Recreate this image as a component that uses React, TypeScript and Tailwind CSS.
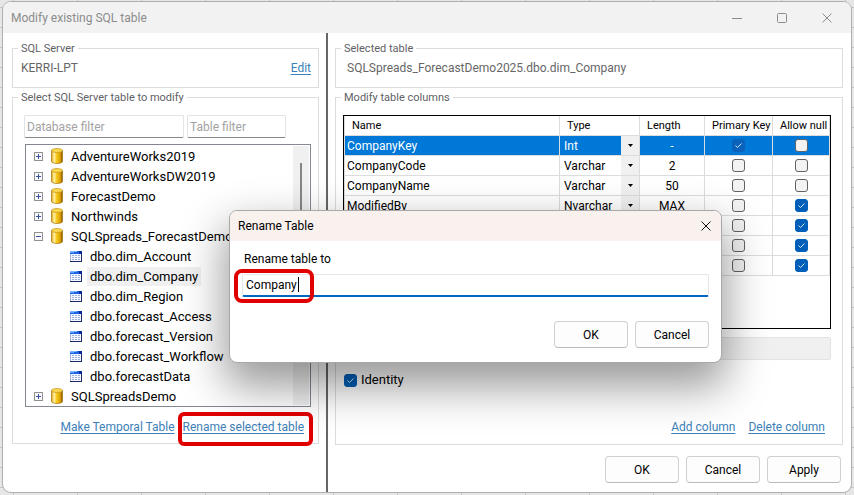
import React from "react";

const legend = "absolute -top-[7px] left-[5px] bg-white px-[3px] text-[11px] leading-[14px] text-[#5f5f66]";
const link = "block text-[#3d7fb8] underline underline-offset-2 text-[12px] leading-[16px]";
const pushButton =
  "h-[27px] w-[74px] rounded border border-[#d0d0d0] border-b-[#bbbbbb] bg-[#fdfdfd] text-[12px] leading-[16px] text-black";
const filterInput =
  "h-[23px] rounded-xs border border-[#e3e3e3] border-b-[#868686] bg-white px-[2px] text-[12px] placeholder:text-[#a3a3a3]";

type Node = { label: string; open?: boolean; tables?: string[] };

const databases: Node[] = [
  { label: "AdventureWorks2019" },
  { label: "AdventureWorksDW2019" },
  { label: "ForecastDemo" },
  { label: "Northwinds" },
  {
    label: "SQLSpreads_ForecastDemo",
    open: true,
    tables: [
      "dbo.dim_Account",
      "dbo.dim_Company",
      "dbo.dim_Region",
      "dbo.forecast_Access",
      "dbo.forecast_Version",
      "dbo.forecast_Workflow",
      "dbo.forecastData",
    ],
  },
  { label: "SQLSpreadsDemo" },
];

const columns = [
  { name: "CompanyKey", type: "Int", length: "-", pk: true, nullable: false },
  { name: "CompanyCode", type: "Varchar", length: "2", pk: false, nullable: false },
  { name: "CompanyName", type: "Varchar", length: "50", pk: false, nullable: false },
  { name: "ModifiedBy", type: "Nvarchar", length: "MAX", pk: false, nullable: true },
  { name: "", type: "", length: "", pk: false, nullable: true },
  { name: "", type: "", length: "", pk: false, nullable: true },
  { name: "", type: "", length: "", pk: false, nullable: true },
];

function Expander({ open }: { open?: boolean }) {
  return (
    <svg width="9" height="9" viewBox="0 0 9 9" className="shrink-0" shapeRendering="crispEdges">
      <rect x="0.5" y="0.5" width="8" height="8" fill="#f8f8f8" stroke="#919191" />
      <path d={open ? "M2 4.5h5" : "M2 4.5h5M4.5 2v5"} stroke="#3a53a0" />
    </svg>
  );
}

function DatabaseIcon() {
  return (
    <svg width="12" height="16" viewBox="0 0 12 16" className="shrink-0">
      <defs>
        <linearGradient id="gold" x1="0" x2="1">
          <stop offset="0" stopColor="#d9a413" />
          <stop offset="0.25" stopColor="#fff3a8" />
          <stop offset="0.45" stopColor="#f8cb1e" />
          <stop offset="0.8" stopColor="#dc9f00" />
          <stop offset="1" stopColor="#7a4600" />
        </linearGradient>
      </defs>
      <path d="M0.5 2.5v11c0 1.1 2.5 2 5.5 2s5.5-.9 5.5-2v-11z" fill="url(#gold)" stroke="#a8730a" strokeWidth="0.7" />
      <ellipse cx="6" cy="2.5" rx="5.5" ry="2" fill="#f9d64e" stroke="#c4951f" strokeWidth="0.7" />
    </svg>
  );
}

function TableIcon() {
  return (
    <svg width="12" height="11" viewBox="0 0 12 11" className="shrink-0" shapeRendering="crispEdges">
      <rect width="12" height="11" fill="#1c2c66" />
      <rect width="12" height="3" fill="#1c62e4" />
      <rect x="0" y="0" width="7" height="1" fill="#79b4ff" />
      <rect x="0" y="1" width="4" height="1" fill="#5b9dfa" />
      <rect x="9" y="0" width="3" height="3" fill="#0a2a9c" />
      <rect x="0" y="3" width="11" height="7" fill="#9fb4e4" />
      <rect x="1" y="3" width="10" height="7" fill="#f4f7ff" />
      <path d="M2 4.5h2M5 4.5h2M8 4.5h2M2 6.5h2M5 6.5h2M8 6.5h2M2 8.5h2M5 8.5h2M8 8.5h2" stroke="#9db0dc" />
    </svg>
  );
}

function Check({ checked, label, dim }: { checked: boolean; label: string; dim?: boolean }) {
  const box = checked
    ? dim
      ? "border-[#0b62ba] bg-[#0b62ba]"
      : "border-[#005fb8] bg-[#005fb8]"
    : "border-[#626262] bg-[#f3f3f3]";
  return (
    <span className="relative block h-[13px] w-[13px]">
      <input
        type="checkbox"
        defaultChecked={checked}
        aria-label={label}
        className={`block h-[13px] w-[13px] appearance-none rounded-[3px] border ${box}`}
      />
      {checked && (
        <svg viewBox="0 0 13 13" className="pointer-events-none absolute inset-0" fill="none" stroke="#cfe6fa">
          <path d="M3.5 6.5l2 2 4-4" />
        </svg>
      )}
    </span>
  );
}

function TreeRow({ children, nested }: { children: React.ReactNode; nested?: boolean }) {
  return (
    <li className={`flex h-5 items-center whitespace-nowrap ${nested ? "pl-11" : "gap-2 pl-2"}`}>
      {children}
    </li>
  );
}

function GroupBox({ title, className, children }: { title: string; className?: string; children: React.ReactNode }) {
  return (
    <section aria-label={title} className={`relative border border-[#dcdcdc] ${className ?? ""}`}>
      <h2 className={legend}>{title}</h2>
      {children}
    </section>
  );
}

function SourcePane() {
  return (
    <div className="flex w-[322px] shrink-0 flex-col gap-[9px] pt-[15px] pr-[7px] pb-12 pl-2">
      <GroupBox title="SQL Server" className="flex h-10 items-center justify-between pr-[7px] pl-2">
        <span className="text-[12px] leading-[16px] text-[#666]">KERRI-LPT</span>
        <a href="#edit" className={link}>Edit</a>
      </GroupBox>

      <GroupBox title="Select SQL Server table to modify" className="flex flex-1 flex-col pt-[17px] pr-[7px] pl-[11px]">
        <div className="flex gap-[3px]">
          <input aria-label="Database filter" placeholder="Database filter" className={`${filterInput} w-40`} />
          <input aria-label="Table filter" placeholder="Table filter" className={`${filterInput} w-[99px]`} />
        </div>
        <div className="mt-[6px] ml-px flex h-[263px] border border-[#828790]">
          <ul className="min-w-0 flex-1 overflow-hidden pt-px text-[13px] leading-[18px] text-black">
            {databases.map((db) => (
              <React.Fragment key={db.label}>
                <TreeRow>
                  <Expander open={db.open} />
                  <DatabaseIcon />
                  <span className="pt-px">{db.label}</span>
                </TreeRow>
                {db.tables?.map((t) => (
                  <TreeRow key={t} nested>
                    <TableIcon />
                    <span className={`ml-[5px] px-[3px] pt-px ${t === "dbo.dim_Company" ? "bg-[#f0f0f0]" : ""}`}>{t}</span>
                  </TreeRow>
                ))}
              </React.Fragment>
            ))}
          </ul>
          <div className="m-px flex w-4 flex-col items-center bg-[#f0f0f0] pt-[17px]">
            <div className="h-40 w-[2px] bg-[#868686]" />
          </div>
        </div>
        <div className="mt-3 flex justify-end gap-2 pr-[7px]">
          <a href="#temporal" className={link}>Make Temporal Table</a>
          <div className="relative">
            <a href="#rename" className={link}>Rename selected table</a>
            <span className="pointer-events-none absolute -top-[7px] -right-[9px] -left-[5px] h-[34px] rounded-md border-4 border-[#e00000]" />
          </div>
        </div>
      </GroupBox>
    </div>
  );
}

function ColumnTable() {
  const head = "border-r border-b border-[#dcdcdc] text-left font-normal whitespace-nowrap";
  const cell = "border-r border-b border-[#dcdcdc]";
  return (
    <div className="h-[214px] border border-black">
      <table className="w-full table-fixed border-separate border-spacing-0 border-l border-[#dcdcdc] text-[12px] leading-[18px] text-black">
        <colgroup>
          <col />
          <col className="w-20" />
          <col className="w-[65px]" />
          <col className="w-[68px]" />
          <col className="w-[57px]" />
        </colgroup>
        <thead>
          <tr className="h-5 text-[11px]">
            <th className={`${head} pl-[7px]`}>Name</th>
            <th className={`${head} pl-[7px]`}>Type</th>
            <th className={`${head} pl-[7px]`}>Length</th>
            <th className={`${head} pl-[7px]`}>Primary Key</th>
            <th className={`${head} pl-[7px]`}>Allow null</th>
          </tr>
        </thead>
        <tbody>
          {columns.map((c, i) => (
            <tr key={i} className={`h-5 ${i === 0 ? "bg-[#0078d7] text-white" : ""}`}>
              <td className={`${cell} pl-[2px]`}>{c.name}</td>
              <td className={cell}>
                <div className="relative flex h-[19px] items-center">
                  <select
                    aria-label={`Type of column ${i + 1}`}
                    defaultValue={c.type}
                    className="h-[19px] w-full appearance-none bg-transparent pl-1"
                  >
                    <option>{c.type}</option>
                  </select>
                  <span className="pointer-events-none absolute top-0 right-0 flex h-[19px] w-[18px] items-center justify-center bg-[#f0f0f0]">
                    <svg width="5" height="3" viewBox="0 0 5 3">
                      <path d="M0 0h5L2.5 3z" fill="#000" />
                    </svg>
                  </span>
                </div>
              </td>
              <td className={`${cell} text-center`}>{c.length}</td>
              <td className={cell}>
                <div className="flex justify-center">
                  <Check checked={c.pk} dim label={`Primary key, column ${i + 1}`} />
                </div>
              </td>
              <td className={cell}>
                <div className="flex justify-center">
                  <Check checked={c.nullable} label={`Allow null, column ${i + 1}`} />
                </div>
              </td>
            </tr>
          ))}
        </tbody>
      </table>
    </div>
  );
}

function DetailPane() {
  return (
    <div className="flex min-w-0 flex-1 flex-col gap-[9px] border-l-2 border-[#666] pt-[15px] pr-[7px] pb-[9px] pl-[7px]">
      <GroupBox title="Selected table" className="flex h-10 items-center pl-[11px]">
        <span className="text-[12px] leading-[16px] text-[#666]">SQLSpreads_ForecastDemo2025.dbo.dim_Company</span>
      </GroupBox>
      <GroupBox title="Modify table columns" className="flex flex-1 flex-col pt-[17px] pr-[11px] pl-[7px]">
        <ColumnTable />
        <input
          disabled
          aria-label="Column details"
          className="mt-2 h-[23px] rounded-xs border border-[#e3e3e3] bg-[#f0f0f0]"
        />
        <label className="mt-[11px] flex items-center gap-1 pl-px text-[13px] leading-[18px] text-black">
          <Check checked label="Identity" />
          Identity
        </label>
        <div className="mt-auto mb-[9px] flex justify-end gap-[13px] pr-[6px]">
          <a href="#add" className={link}>Add column</a>
          <a href="#delete" className={link}>Delete column</a>
        </div>
      </GroupBox>
      <div className="mt-[2px] flex justify-end gap-[7px] pr-[2px]">
        <button className={pushButton}>OK</button>
        <button className={pushButton}>Cancel</button>
        <button className={pushButton}>Apply</button>
      </div>
    </div>
  );
}

function RenameDialog() {
  return (
    <div
      role="dialog"
      aria-label="Rename Table"
      className="absolute top-[210px] left-[229px] w-[493px] overflow-hidden rounded-lg border border-[#a8a8a8] bg-white shadow-[0_20px_44px_4px_rgba(0,0,0,0.4)]"
    >
      <div className="flex h-[30px] items-center justify-between bg-[#f9f1ee] pr-[10px] pl-2">
        <h2 className="text-[12px] leading-[16px] text-black">Rename Table</h2>
        <button aria-label="Close" className="h-[10px] w-[10px]">
          <svg viewBox="0 0 10 10" fill="none" stroke="#111">
            <path d="M0.5 0.5l9 9M9.5 0.5l-9 9" />
          </svg>
        </button>
      </div>
      <div className="px-3 pt-[10px] pb-[14px]">
        <label htmlFor="rename" className="block pl-[2px] text-[12px] leading-[16px] text-black">
          Rename table to
        </label>
        <div className="relative mt-[7px]">
          <input
            id="rename"
            defaultValue="Company"
            className="block h-[23px] w-full rounded-xs border border-b-2 border-[#e6e6e6] border-b-[#0067c0] px-[3px] text-[12px] text-black outline-none"
          />
          <span className="pointer-events-none absolute top-[3px] left-[56px] h-[15px] w-px bg-black" />
          <span className="pointer-events-none absolute -top-[5px] -left-2 h-[34px] w-20 rounded-lg border-4 border-[#e00000]" />
        </div>
        <div className="mt-6 flex justify-end gap-[7px]">
          <button className={pushButton}>OK</button>
          <button className={pushButton}>Cancel</button>
        </div>
      </div>
    </div>
  );
}

export default function App() {
  return (
    <div className="relative flex min-h-screen flex-col bg-[#e6e6e6] bg-[linear-gradient(to_right,#c6c6c6_1px,transparent_1px),linear-gradient(to_bottom,#c6c6c6_1px,transparent_1px)] bg-size-[64px_20px] bg-position-[13px_7px] px-[3px] pt-[2px] pb-[3px] font-['Roboto','Open_Sans',sans-serif]">
      <main className="flex flex-1 flex-col overflow-hidden rounded-lg bg-white shadow-[0_0_0_1px_#b0b0b0]">
        <header className="flex h-[31px] items-center justify-between bg-[#f2f2f2] pr-[19px] pl-2 text-[#8c8c8c]">
          <h1 className="text-[12px] leading-[16px]">Modify existing SQL table</h1>
          <div className="flex gap-[35px]">
            <button aria-label="Minimize" className="h-[10px] w-[10px]">
              <svg viewBox="0 0 10 10" fill="none" stroke="currentColor"><path d="M0 5.5h10" /></svg>
            </button>
            <button aria-label="Maximize" className="h-[10px] w-[10px]">
              <svg viewBox="0 0 10 10" fill="none" stroke="currentColor"><rect x="0.5" y="0.5" width="9" height="9" rx="1" /></svg>
            </button>
            <button aria-label="Close" className="h-[10px] w-[10px]">
              <svg viewBox="0 0 10 10" fill="none" stroke="currentColor"><path d="M0.5 0.5l9 9M9.5 0.5l-9 9" /></svg>
            </button>
          </div>
        </header>
        <div className="flex flex-1 px-px">
          <SourcePane />
          <DetailPane />
        </div>
      </main>
      <RenameDialog />
    </div>
  );
}
